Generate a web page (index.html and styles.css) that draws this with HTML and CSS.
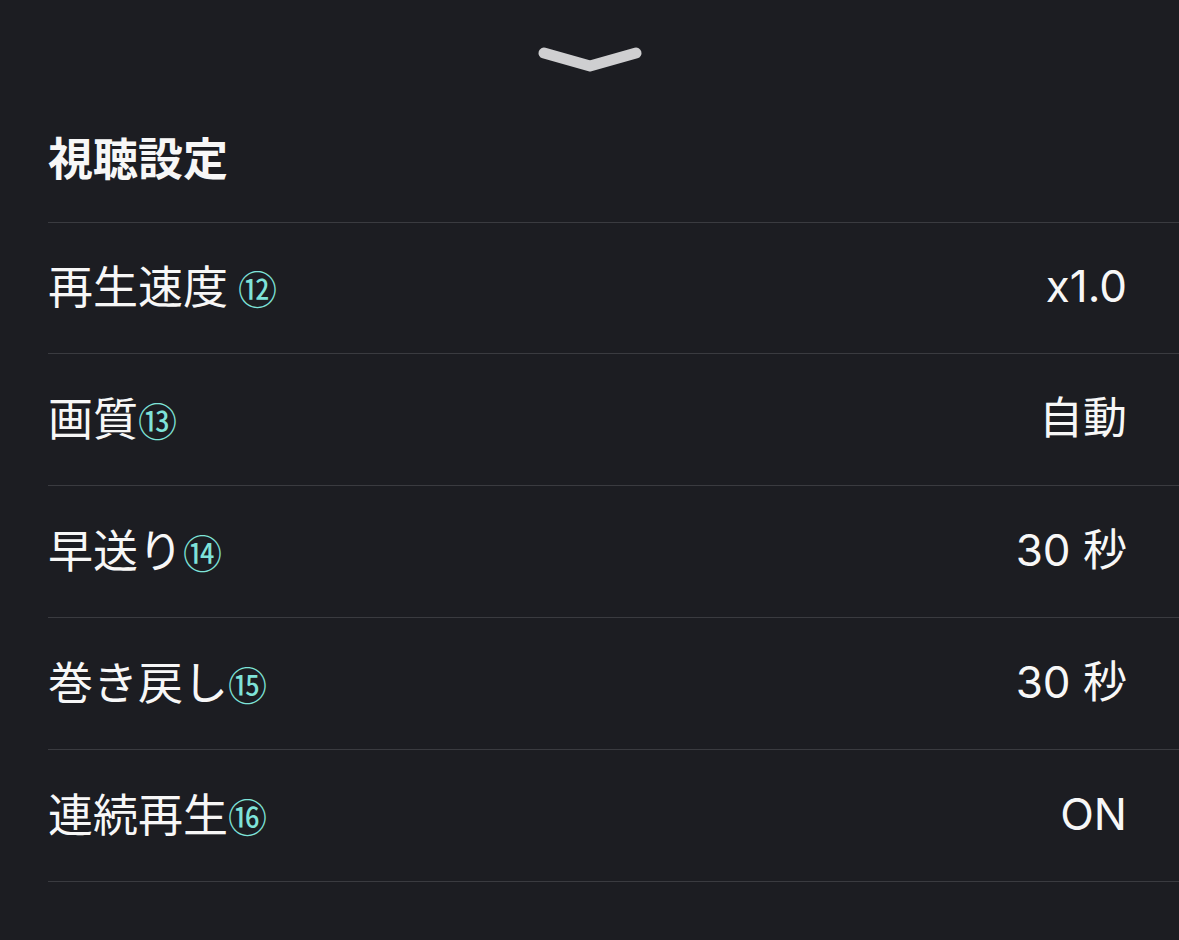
FILE: index.html
```html
<!DOCTYPE html>
<html lang="ja">
<head>
    <meta charset="UTF-8">
    <meta name="viewport" content="width=device-width, initial-scale=1.0">
    <title>視聴設定</title>
    <link rel="stylesheet" href="styles.css">
</head>
<body>

    <div class="sheet">
        <!-- Drag handle -->
        <div class="handle">
            <svg width="110" height="28" viewBox="0 0 110 28">
                <path d="M9 9 L55 22 L101 9" fill="none" stroke="#cfcfd1" stroke-width="11" stroke-linecap="round" stroke-linejoin="round"/>
            </svg>
        </div>

        <h1 class="title">視聴設定</h1>

        <ul class="settings">
            <li class="row">
                <span class="label">再生速度 <span class="mark">⑫</span></span>
                <span class="value">x1.0</span>
            </li>
            <li class="row">
                <span class="label">画質<span class="mark">⑬</span></span>
                <span class="value">自動</span>
            </li>
            <li class="row">
                <span class="label">早送り<span class="mark">⑭</span></span>
                <span class="value">30 秒</span>
            </li>
            <li class="row">
                <span class="label">巻き戻し<span class="mark">⑮</span></span>
                <span class="value">30 秒</span>
            </li>
            <li class="row">
                <span class="label">連続再生<span class="mark">⑯</span></span>
                <span class="value">ON</span>
            </li>
        </ul>
    </div>

</body>
</html>
```

FILE: styles.css
```css
body {
    margin: 0;
    background-color: #1c1d22;
    color: #f7f7f7;
    font-family: "Noto Sans CJK JP", sans-serif;
}
.sheet {
    padding-left: 48px;
}
.handle {
    display: flex;
    justify-content: center;
    padding-top: 44px;
    margin-left: -48px;
}
.handle svg {
    display: block;
}
.title {
    margin: 0;
    padding: 53px 0 33px;
    font-size: 45px;
    line-height: 64px;
    font-weight: 700;
    border-bottom: 1px solid #3a3b40;
}
.settings {
    list-style-type: none;
    margin: 0;
    padding: 0;
}
.row {
    display: flex;
    align-items: center;
    justify-content: space-between;
    height: 131px;
    padding-right: 52px;
    border-bottom: 1px solid #3a3b40;
    font-size: 45px;
    line-height: 60px;
}
.row:first-child {
    height: 130px;
}
.label {
    margin-top: -4px;
}
.mark {
    color: #7fe3d9;
    font-size: 39px;
    font-family: "Noto Sans CJK JP", sans-serif;
}
.value {
    font-family: "Inter", "Noto Sans CJK JP", sans-serif;
    font-size: 44px;
    margin-top: -4px;
}
```
